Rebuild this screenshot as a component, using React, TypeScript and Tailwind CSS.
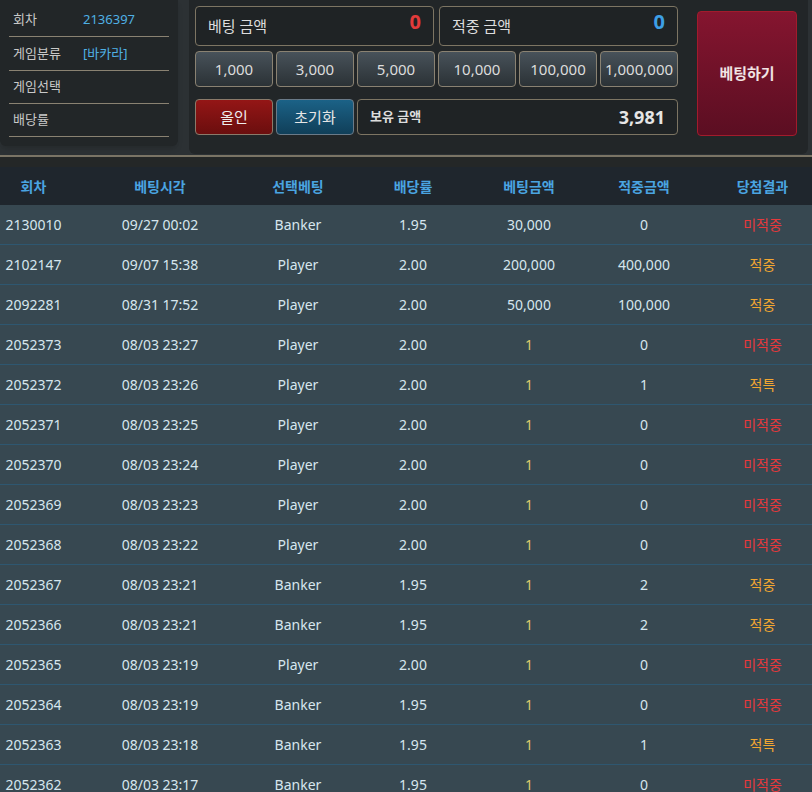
const info = [
  { label: '회차', value: '2136397' },
  { label: '게임분류', value: '[바카라]' },
  { label: '게임선택', value: '' },
  { label: '배당률', value: '' },
];

const chips = ['1,000', '3,000', '5,000', '10,000', '100,000', '1,000,000'];

const headers = ['회차', '베팅시각', '선택베팅', '배당률', '베팅금액', '적중금액', '당첨결과'];

const rows = [
  ['2130010', '09/27 00:02', 'Banker', '1.95', '30,000', '0', '미적중'],
  ['2102147', '09/07 15:38', 'Player', '2.00', '200,000', '400,000', '적중'],
  ['2092281', '08/31 17:52', 'Player', '2.00', '50,000', '100,000', '적중'],
  ['2052373', '08/03 23:27', 'Player', '2.00', '1', '0', '미적중'],
  ['2052372', '08/03 23:26', 'Player', '2.00', '1', '1', '적특'],
  ['2052371', '08/03 23:25', 'Player', '2.00', '1', '0', '미적중'],
  ['2052370', '08/03 23:24', 'Player', '2.00', '1', '0', '미적중'],
  ['2052369', '08/03 23:23', 'Player', '2.00', '1', '0', '미적중'],
  ['2052368', '08/03 23:22', 'Player', '2.00', '1', '0', '미적중'],
  ['2052367', '08/03 23:21', 'Banker', '1.95', '1', '2', '적중'],
  ['2052366', '08/03 23:21', 'Banker', '1.95', '1', '2', '적중'],
  ['2052365', '08/03 23:19', 'Player', '2.00', '1', '0', '미적중'],
  ['2052364', '08/03 23:19', 'Banker', '1.95', '1', '0', '미적중'],
  ['2052363', '08/03 23:18', 'Banker', '1.95', '1', '1', '적특'],
  ['2052362', '08/03 23:17', 'Banker', '1.95', '1', '0', '미적중'],
];

const cols = 'grid grid-cols-[67px_186px_90px_140px_92px_138px_1fr]';

function resultColor(r: string) {
  return r === '미적중' ? 'text-[#e5393c]' : 'text-[#f2a631]';
}

export default function App() {
  return (
    <div className="w-[812px] h-[792px] overflow-hidden bg-[#374851] font-['Noto_Sans','Noto_Sans_CJK_KR',sans-serif] text-[14px]">
      {/* top betting area */}
      <div className="flex bg-[#2c3134] h-[157px] border-b-2 border-[#7a7465]">
        <div className="w-[178px] h-[146px] bg-[#222628] rounded-b-md shadow-md px-[9px] pt-[4px]">
          {info.map((it) => (
            <div key={it.label} className="flex items-center h-[33.3px] border-b border-[#8a8272] pl-1 text-[13px]">
              <span className="w-[70px] text-[#c9c9c9]">{it.label}</span>
              <span className="text-[#4fb0e4]">{it.value}</span>
            </div>
          ))}
        </div>

        <div className="ml-[11px] w-[619px] h-[154px] bg-[#222628] rounded-b-md pl-[6px] pt-[6px] flex">
          <div className="w-[483px] flex flex-col">
            <div className="flex gap-[5px]">
              <div className="w-[239px] h-[40px] rounded border border-[#7d7563] bg-[#1f2325] flex items-center justify-between px-3">
                <span className="text-[15px] text-[#ddd]">베팅 금액</span>
                <span className="text-[20px] font-bold text-[#e23b3b] -mt-2">0</span>
              </div>
              <div className="w-[239px] h-[40px] rounded border border-[#7d7563] bg-[#1f2325] flex items-center justify-between px-3">
                <span className="text-[15px] text-[#ddd]">적중 금액</span>
                <span className="text-[20px] font-bold text-[#3d9fe6] -mt-2">0</span>
              </div>
            </div>

            <div className="flex gap-[3px] mt-[5px]">
              {chips.map((c) => (
                <button
                  key={c}
                  className="w-[78px] h-[36px] rounded border border-[#8a8272] bg-gradient-to-b from-[#48525a] to-[#2b3236] text-[15px] text-[#dcdcdc]"
                >
                  {c}
                </button>
              ))}
            </div>

            <div className="flex gap-[3px] mt-[12px]">
              <button className="w-[78px] h-[36px] rounded border border-[#8a7a6a] bg-gradient-to-b from-[#941616] to-[#6b0e0e] text-[15px] text-[#eee]">
                올인
              </button>
              <button className="w-[78px] h-[36px] rounded border border-[#6a7a88] bg-gradient-to-b from-[#1b6287] to-[#103f59] text-[15px] text-[#e6e6e6]">
                초기화
              </button>
              <div className="flex-1 h-[36px] rounded border border-[#7d7563] bg-[#1f2325] flex items-center justify-between px-3">
                <span className="text-[13px] font-semibold text-[#ddd]">보유 금액</span>
                <span className="text-[18px] font-bold text-[#e6e6e6]">3,981</span>
              </div>
            </div>
          </div>

          <button className="ml-[19px] mt-[5px] w-[100px] h-[125px] rounded border border-[#a21b2c] bg-gradient-to-b from-[#85152f] to-[#5b0e22] text-[15px] font-bold text-[#f1e4e4]">
            베팅하기
          </button>
        </div>
      </div>

      <div className="h-[10px] bg-[#242727]" />

      {/* history table */}
      <div className={`${cols} h-[38px] items-center bg-[#1f262d] text-[#4aa4e1] font-semibold`}>
        {headers.map((h) => (
          <div key={h} className="text-center">{h}</div>
        ))}
      </div>

      {rows.map((r) => (
        <div key={r[0]} className={`${cols} h-[40px] items-center border-b border-[#2e5770] text-[#d6e6ee]`}>
          <div className="text-center">{r[0]}</div>
          <div className="text-center">{r[1]}</div>
          <div className="text-center">{r[2]}</div>
          <div className="text-center">{r[3]}</div>
          <div className={`text-center ${r[4] === '1' ? 'text-[#dccb6c]' : ''}`}>{r[4]}</div>
          <div className="text-center">{r[5]}</div>
          <div className={`text-center ${resultColor(r[6])}`}>{r[6]}</div>
        </div>
      ))}
    </div>
  );
}
